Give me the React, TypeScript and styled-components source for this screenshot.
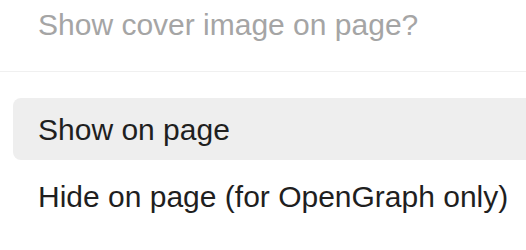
import styled, { createGlobalStyle } from "styled-components";

const GlobalStyle = createGlobalStyle`
  html, body {
    margin: 0;
    padding: 0;
    background: #ffffff;
  }
  body {
    font-family: "Liberation Sans", Arial, Helvetica, sans-serif;
    overflow: hidden;
  }
`;

const options = ["Show on page", "Hide on page (for OpenGraph only)"];

export default function App() {
  const selected = 0;
  return (
    <Panel>
      <GlobalStyle />
      <Header>
        <Title>Show cover image on page?</Title>
      </Header>
      <OptionList>
        {options.map((label, i) => (
          <OptionRow key={label} active={i === selected}>
            {label}
          </OptionRow>
        ))}
      </OptionList>
    </Panel>
  );
}

const Panel = styled.div`
  width: 526px;
  height: 250px;
  overflow: hidden;
  background: #ffffff;
`;

const Header = styled.div`
  height: 72px;
  padding-left: 38px;
  border-bottom: 1px solid #f0f0f0;
  box-sizing: border-box;
`;

const Title = styled.div`
  font-size: 30px;
  line-height: 50px;
  color: #a5a5a5;
  white-space: nowrap;
`;

const OptionList = styled.div`
  display: flex;
  flex-direction: column;
  gap: 5px;
  padding: 26px 0 0 13px;
  margin-right: -14px;
`;

const OptionRow = styled.div<{ active?: boolean }>`
  height: 62px;
  line-height: 64px;
  padding-left: 25px;
  border-radius: 8px;
  font-size: 30px;
  color: #1f1f1f;
  white-space: nowrap;
  background: ${({ active }) => (active ? "#eeeeee" : "transparent")};
`;
